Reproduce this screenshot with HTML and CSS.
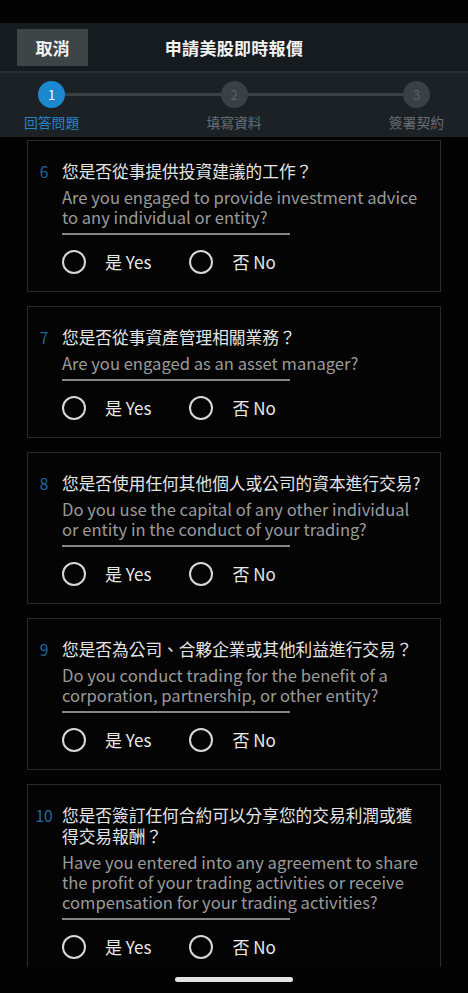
FILE: index.html
```html
<!DOCTYPE html>
<html lang="zh-Hant">
<head>
    <meta charset="UTF-8">
    <meta name="viewport" content="width=device-width, initial-scale=1.0">
    <title>申請美股即時報價</title>
    <link rel="stylesheet" href="styles.css">
</head>
<body>
    <div class="status-bar"></div>

    <!-- Header -->
    <div class="top-bar">
        <button class="cancel-btn">取消</button>
        <div class="title">申請美股即時報價</div>
        <div></div>
    </div>

    <!-- Steps -->
    <div class="steps">
        <div class="step-dots">
            <span class="dot active">1</span>
            <span class="track"></span>
            <span class="dot">2</span>
            <span class="track"></span>
            <span class="dot">3</span>
        </div>
        <div class="step-labels">
            <span class="active">回答問題</span>
            <span>填寫資料</span>
            <span>簽署契約</span>
        </div>
    </div>

    <div class="questions">
        <div class="card">
            <div class="num">6</div>
            <div class="body">
                <div class="zh">您是否從事提供投資建議的工作？</div>
                <div class="en">Are you engaged to provide investment advice to any individual or entity?</div>
                <div class="underline"></div>
                <div class="options">
                    <label class="option"><span class="radio"></span>是 Yes</label>
                    <label class="option"><span class="radio"></span>否 No</label>
                </div>
            </div>
        </div>

        <div class="card">
            <div class="num">7</div>
            <div class="body">
                <div class="zh">您是否從事資產管理相關業務？</div>
                <div class="en">Are you engaged as an asset manager?</div>
                <div class="underline"></div>
                <div class="options">
                    <label class="option"><span class="radio"></span>是 Yes</label>
                    <label class="option"><span class="radio"></span>否 No</label>
                </div>
            </div>
        </div>

        <div class="card">
            <div class="num">8</div>
            <div class="body">
                <div class="zh">您是否使用任何其他個人或公司的資本進行交易?</div>
                <div class="en">Do you use the capital of any other individual or entity in the conduct of your trading?</div>
                <div class="underline"></div>
                <div class="options">
                    <label class="option"><span class="radio"></span>是 Yes</label>
                    <label class="option"><span class="radio"></span>否 No</label>
                </div>
            </div>
        </div>

        <div class="card">
            <div class="num">9</div>
            <div class="body">
                <div class="zh">您是否為公司、合夥企業或其他利益進行交易？</div>
                <div class="en">Do you conduct trading for the benefit of a corporation, partnership, or other entity?</div>
                <div class="underline"></div>
                <div class="options">
                    <label class="option"><span class="radio"></span>是 Yes</label>
                    <label class="option"><span class="radio"></span>否 No</label>
                </div>
            </div>
        </div>

        <div class="card">
            <div class="num">10</div>
            <div class="body">
                <div class="zh">您是否簽訂任何合約可以分享您的交易利潤或獲得交易報酬？</div>
                <div class="en">Have you entered into any agreement to share the profit of your trading activities or receive compensation for your trading activities?</div>
                <div class="underline"></div>
                <div class="options">
                    <label class="option"><span class="radio"></span>是 Yes</label>
                    <label class="option"><span class="radio"></span>否 No</label>
                </div>
            </div>
        </div>
    </div>

    <div class="home-bar">
        <span class="home-indicator"></span>
    </div>
</body>
</html>
```

FILE: styles.css
```css
body {
    margin: 0;
    padding: 0;
    width: 468px;
    height: 993px;
    overflow: hidden;
    display: flex;
    flex-direction: column;
    background-color: #030303;
    font-family: 'Noto Sans CJK TC', 'Noto Sans', sans-serif;
    color: #e6e6e6;
}

.status-bar {
    height: 23px;
    flex-shrink: 0;
}

/* Header */
.top-bar {
    height: 48px;
    flex-shrink: 0;
    display: grid;
    grid-template-columns: 1fr auto 1fr;
    align-items: center;
    padding: 0 17px;
    background-color: #161b1f;
    border-bottom: 2px solid #262c31;
}

.cancel-btn {
    justify-self: start;
    width: 71px;
    height: 37px;
    border: none;
    outline: none;
    background-color: #3f4447;
    color: #f2f2f2;
    font-family: inherit;
    font-size: 17px;
    font-weight: bold;
    padding: 0;
}

.title {
    font-size: 17px;
    font-weight: bold;
    color: #f2f2f2;
    letter-spacing: 0.3px;
}

/* Steps */
.steps {
    height: 64px;
    flex-shrink: 0;
    background-color: #1b2125;
    box-sizing: border-box;
    padding-top: 8px;
}

.step-dots {
    display: flex;
    align-items: center;
    padding: 0 38px;
}

.dot {
    width: 27px;
    height: 27px;
    border-radius: 50%;
    background-color: #3a4045;
    color: #5d6368;
    font-size: 13px;
    display: flex;
    align-items: center;
    justify-content: center;
    flex-shrink: 0;
}

.dot.active {
    background-color: #1b88d0;
    color: #ffffff;
}

.track {
    flex: 1;
    height: 3px;
    background-color: #3b4145;
}

.step-labels {
    display: flex;
    justify-content: space-between;
    padding: 0 24px;
    margin-top: 5px;
    font-size: 13.8px;
    line-height: 18px;
    color: #686e72;
}

.step-labels .active {
    color: #2784c6;
}

/* Question cards */
.questions {
    flex: 1;
    overflow: hidden;
    padding: 3px 27px 0 27px;
}

.card {
    display: flex;
    border: 1px solid #2a2a2a;
    padding: 20px 15px 17px 3px;
    margin-bottom: 14px;
    background-color: #040404;
}

.num {
    width: 26px;
    margin-right: 5px;
    flex-shrink: 0;
    text-align: center;
    font-size: 15.5px;
    line-height: 21px;
    color: #2268a2;
}

.body {
    flex: 1;
}

.zh {
    font-size: 16.7px;
    line-height: 21px;
    color: #e4e4e4;
}

.en {
    margin-top: 5px;
    font-size: 16.6px;
    line-height: 20px;
    color: #9a9a9a;
}

.underline {
    width: 228px;
    height: 2px;
    margin-top: 6px;
    background-color: #858585;
}

.options {
    display: flex;
    gap: 38px;
    margin-top: 15px;
}

.option {
    display: flex;
    align-items: center;
    gap: 19px;
    font-size: 17px;
    line-height: 24px;
    color: #e8e8e8;
}

.radio {
    width: 20px;
    height: 20px;
    border: 2px solid #d8d8d8;
    border-radius: 50%;
}

.home-bar {
    height: 26px;
    flex-shrink: 0;
    display: flex;
    justify-content: center;
    padding-top: 10px;
    box-sizing: border-box;
}

.home-indicator {
    width: 118px;
    height: 5px;
    border-radius: 3px;
    background-color: #e2e2e2;
}
```
